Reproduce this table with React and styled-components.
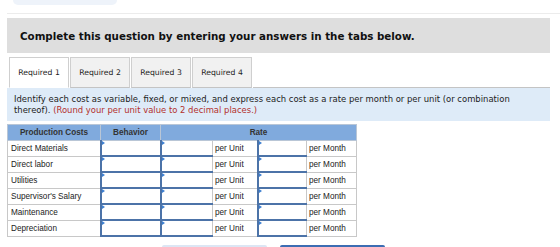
import styled, { createGlobalStyle } from 'styled-components'

const rows = [
  'Direct Materials',
  'Direct labor',
  'Utilities',
  "Supervisor's Salary",
  'Maintenance',
  'Depreciation',
]

const tabs = ['Required 1', 'Required 2', 'Required 3', 'Required 4']

function App() {
  return (
    <>
      <GlobalStyle />
      <Page>
        <TopStub />
        <Divider />
        <Banner>Complete this question by entering your answers in the tabs below.</Banner>

        <TabBar>
          <TabGap />
          {tabs.map((t, i) => (
            <Tab key={t} $active={i === 0}>{t}</Tab>
          ))}
          <TabFiller />
        </TabBar>

        <Instructions>
          Identify each cost as variable, fixed, or mixed, and express each cost as a rate per month or per unit (or combination
          thereof). <Hint>(Round your per unit value to 2 decimal places.)</Hint>
        </Instructions>

        <Table>
          <colgroup>
            <col style={{ width: 93 }} />
            <col style={{ width: 60 }} />
            <col style={{ width: 52 }} />
            <col style={{ width: 45 }} />
            <col style={{ width: 49 }} />
            <col style={{ width: 50 }} />
          </colgroup>
          <thead>
            <tr>
              <Head>Production Costs</Head>
              <Head>Behavior</Head>
              <Head colSpan={4}>Rate</Head>
            </tr>
          </thead>
          <tbody>
            {rows.map(r => (
              <tr key={r}>
                <Label>{r}</Label>
                <InputCell><Flag /></InputCell>
                <InputCell><Flag /></InputCell>
                <Unit>per Unit</Unit>
                <InputCell><Flag /></InputCell>
                <Unit>per Month</Unit>
              </tr>
            ))}
          </tbody>
        </Table>

        <Buttons>
          <NavButton />
          <NavButton $primary />
        </Buttons>
      </Page>
    </>
  )
}

export default App

/***************************** Styled Components *****************************/

const GlobalStyle = createGlobalStyle`
  body {
    margin: 0;
    background: #fff;
    overflow: hidden;
  }
`

const Page = styled.div`
  width: 560px;
  height: 247px;
  overflow: hidden;
  padding: 0 10px 0 7px;
  box-sizing: border-box;
  font-family: "DejaVu Sans", Verdana, sans-serif;
  color: #111;
`

const TopStub = styled.div`
  width: 104px;
  height: 5px;
  margin-left: 6px;
  background: #eef3fa;
  border-radius: 0 0 5px 5px;
`

const Divider = styled.div`
  height: 1px;
  margin: 8px -10px 4px 0;
  background: #ececec;
`

const Banner = styled.div`
  height: 35px;
  display: flex;
  align-items: center;
  padding-left: 13px;
  background: #dedede;
  font-weight: bold;
  font-size: 10.3px;
  color: #111;
`

const TabBar = styled.div`
  display: flex;
  margin-top: 4px;
`

const TabGap = styled.div`
  width: 2px;
`

const Tab = styled.div`
  width: 58px;
  height: 29px;
  margin-right: 1px;
  display: flex;
  align-items: center;
  justify-content: center;
  border: 1px solid #cfcfcf;
  border-bottom: ${p => (p.$active ? '1px solid transparent' : '1px solid #c4c4c4')};
  background: ${p => (p.$active ? '#fff' : '#f1f1f1')};
  font-size: 7.7px;
  color: #222;
`

const TabFiller = styled.div`
  flex: 1;
  border-bottom: 1px solid #c4c4c4;
`

const Instructions = styled.div`
  height: 33px;
  box-sizing: border-box;
  padding: 6px 7px 0;
  background: #deebf8;
  font-size: 8.45px;
  line-height: 11px;
  color: #222;
`

const Hint = styled.span`
  color: #b3302c;
`

const Table = styled.table`
  margin-top: 3px;
  border-collapse: collapse;
  table-layout: fixed;
  width: 350px;
  font-family: "Liberation Sans", Arial, sans-serif;
  font-size: 8.2px;
  color: #222;
`

const Head = styled.th`
  height: 15px;
  padding: 0;
  background: #80aadd;
  border: 1px solid #b9c6d6;
  font-weight: bold;
  text-align: center;
  color: #333;
`

const Label = styled.td`
  height: 14px;
  padding: 0 3px;
  border: 1px solid #c8c8c8;
  white-space: nowrap;
`

const Unit = styled(Label)`
  padding: 0 2px;
`

const InputCell = styled.td`
  position: relative;
  height: 14px;
  padding: 0;
  background: #fff;
  border-top: 1px solid #6f8fbb;
  border-left: 2px solid #4c73a8;
  border-bottom: 2px solid #4c73a8;
  border-right: 1px solid #c8c8c8;
`

const Flag = styled.span`
  position: absolute;
  left: 0;
  top: 0;
  width: 0;
  height: 0;
  border-top: 2px solid transparent;
  border-bottom: 2px solid transparent;
  border-left: 3px solid #3d7fd0;
`

const Buttons = styled.div`
  display: flex;
  gap: 13px;
  margin-top: 8px;
  padding-left: 155px;
`

const NavButton = styled.div`
  width: 105px;
  height: 20px;
  background: ${p => (p.$primary ? '#3c6db3' : '#dce6f4')};
  border-radius: 2px;
`
